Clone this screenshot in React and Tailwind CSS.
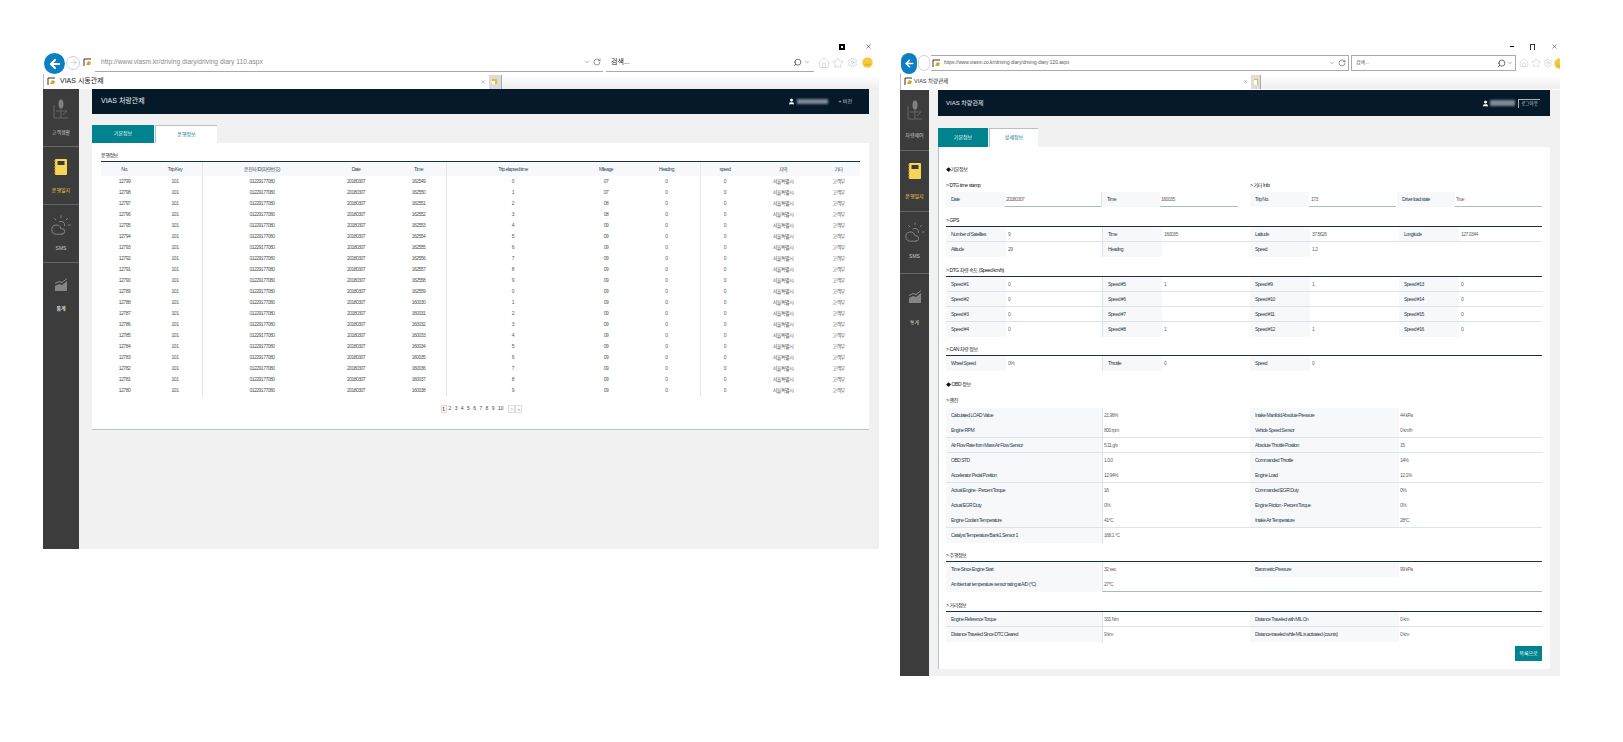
import React from 'react';
import { ArrowLeft, ArrowRight, ChevronDown, CloudSun, Home, RotateCw, Search, Settings, Star, User, X } from 'lucide-react';

const LABEL_TEXT = 'text-[#2c3e50]';
const TINY = 'text-[5px] tracking-[-0.5px]';

function Smiley() {
  return (
    <svg width="11" height="11" viewBox="0 0 11 11" className="shrink-0">
      <circle cx="5.5" cy="5.5" r="5.2" fill="#f6c93c" />
      <path d="M3 7c1.4 1.2 3.6 1.2 5 0" stroke="#b98a14" strokeWidth="0.6" fill="none" />
    </svg>
  );
}

function PageIcon() {
  return (
    <svg width="9" height="9" viewBox="0 0 9 9" className="shrink-0">
      <path d="M1 1h7" stroke="#333" strokeWidth="1" />
      <path d="M1 1v7" stroke="#333" strokeWidth="1" />
      <path d="M3 7l2-4 3 1-1 3z" fill="#d9a520" />
    </svg>
  );
}

function MicIcon() {
  return (
    <svg width="22" height="22" viewBox="0 0 22 22" className="shrink-0">
      <ellipse cx="11" cy="6" rx="2.5" ry="4.5" fill="#808080" />
      <path d="M11 10v10M4 20h14M6 13h11M4 7v13M17 13l-4 4" stroke="#6f6f6f" strokeWidth="0.8" fill="none" />
    </svg>
  );
}

function NoteIcon() {
  return (
    <svg width="22" height="22" viewBox="0 0 22 22" className="shrink-0">
      <rect x="5" y="3" width="12" height="16" rx="1" fill="#f7d358" />
      <rect x="7.5" y="5" width="7" height="4" fill="#3a3a36" />
      <path d="M4 5h2M4 8h2M4 11h2M4 14h2M4 17h2" stroke="#c9a42a" strokeWidth="1" />
    </svg>
  );
}

function ChartIcon() {
  return (
    <svg width="22" height="22" viewBox="0 0 22 22" className="shrink-0">
      <path d="M5 12l4-2 3 1 5-4v10H5z" fill="#858585" />
      <path d="M5 9.5l4-2 3 1 5-4" stroke="#8f8f8f" strokeWidth="1" fill="none" />
    </svg>
  );
}

function SideItem({ icon, label, active, spacing }) {
  return (
    <div className={`flex flex-col items-center pt-[9px] border-b border-[#666666] ${spacing}`}>
      {icon}
      <div className={active ? 'text-[5px] leading-[8px] text-[#f3d04f] whitespace-nowrap' : 'text-[5px] leading-[8px] text-[#c9c9c9] whitespace-nowrap'}>{label}</div>
    </div>
  );
}

function Title({ className, children }) {
  return <div className={`h-[10px] text-[5px] tracking-[-0.4px] leading-[10px] text-[#111111] ${className}`}>{children}</div>;
}

function Cell({ label, value, divider, last }) {
  const rule = last ? '' : 'border-b border-b-[#dbe3ec]';
  return (
    <>
      <div className={`h-[15px] pl-[5px] leading-[15px] truncate ${label ? 'bg-[#f6f8fa]' : ''} ${LABEL_TEXT} ${divider ? 'border-l border-l-[#dbe3ec]' : ''} ${rule}`}>{label}</div>
      <div className={`h-[15px] pl-[2px] leading-[15px] text-[#666666] ${rule}`}>{value}</div>
    </>
  );
}

function FourRows({ rows }) {
  return (
    <div className={`grid grid-cols-[60px_96px_60px_88px_60px_89px_60px_83px] border-t border-[#1b3044] ${TINY}`}>
      {rows.map((row, r) =>
        row.map((c, i) => <Cell key={`${r}-${i}`} label={c[0]} value={c[1]} divider={i === 1} last={r === rows.length - 1} />)
      )}
    </div>
  );
}

function WideRows({ rows, line }) {
  return (
    <div className={`grid grid-cols-[156px_148px_149px_143px] ${TINY} ${line ? 'border-t border-[#1b3044]' : ''}`}>
      {rows.map((row, r) => (
        <React.Fragment key={r}>
          {row.cells.map((c, i) => (
            <React.Fragment key={i}>
              <div className={`h-[15px] pl-[5px] bg-[#f6f8fa] leading-[15px] truncate ${LABEL_TEXT} ${row.b ? 'border-b border-b-[#dbe3ec]' : ''}`}>{c[0]}</div>
              <div className={`h-[15px] pl-[1px] leading-[15px] text-[#666666] ${i === 0 ? 'border-l border-l-[#dbe3ec]' : ''} ${row.b ? 'border-b border-b-[#dbe3ec]' : ''} ${row.u ? 'border-b border-b-[#a9bacb]' : ''}`}>{c[1]}</div>
            </React.Fragment>
          ))}
          {row.cells.length === 1 && (
            <div className={`col-span-2 h-[15px] ${row.u ? 'border-b border-b-[#a9bacb]' : ''}`} />
          )}
        </React.Fragment>
      ))}
    </div>
  );
}

const COLS = ['No.', 'Trip Key', '운전자 ID(차량번호)', 'Date', 'Time', 'Trip elapsed time', 'Mileage', 'Heading', 'speed', '지역', '기타'];
const TD = ['w-[47px]', 'w-[55px] border-r border-[#e3e6ea]', 'w-[118px]', 'w-[70px]', 'w-[56px] border-r border-[#e3e6ea]', 'w-[132px]', 'w-[54px]', 'w-[68px] border-r border-[#e3e6ea]', 'w-[48px]', 'w-[68px]', 'w-[43px]'];
const TIMES = ['162549', '162550', '162551', '162552', '162553', '162554', '162555', '162556', '162557', '162558', '162559', '160030', '160031', '160032', '160033', '160034', '160035', '160036', '160037', '160038'];
const MILE = ['07', '07', '08', '08', '09', '09', '09', '09', '09', '09', '09', '09', '09', '09', '09', '09', '09', '09', '09', '09'];
const TABLE_ROWS = TIMES.map((t, i) => [
  String(12799 - i), '101', '01229177080', '20180307', t, String(i % 10), MILE[i], '0', '0', '서울특별시', '고객무',
]);

function DrivingWindow() {
  return (
    <div className="w-[836px] mt-[40px] ml-[43px] shrink-0">
      <div className="h-[13px] flex items-center justify-end pr-[7px] gap-[20px]">
        <div className="w-[6px] h-[6px] border-2 border-black" />
        <X size={7} color="#333" />
      </div>
      <div className="relative h-[19px] flex items-center">
        <div className="absolute left-[1px] top-0 w-[21px] h-[21px] rounded-full bg-[#0a7fc4] flex items-center justify-center">
          <ArrowLeft size={14} color="#fff" strokeWidth={3.5} />
        </div>
        <div className="ml-[23px] w-[14px] h-[14px] rounded-full border border-[#cfcfcf] flex items-center justify-center shrink-0">
          <ArrowRight size={9} color="#c4c4c4" />
        </div>
        <div className="ml-[3px] w-[10px] shrink-0"><PageIcon /></div>
        <div className="ml-[2px] w-[508px] h-[19px] flex items-center border-b border-[#aaaaaa] pl-[6px] shrink-0">
          <span className="text-[6.7px] text-[#8a8a8a] whitespace-nowrap">http://www.vlasm.kr/driving diary/driving diary 110.aspx</span>
          <ChevronDown size={6} color="#666" className="ml-auto" />
          <RotateCw size={8} color="#666" className="ml-[3px] mr-[2px]" />
        </div>
        <div className="ml-[3px] w-[208px] h-[19px] flex items-center border-b border-[#aaaaaa] pl-[5px] shrink-0">
          <span className="text-[7px] text-[#222]">검색...</span>
          <Search size={9} color="#444" className="ml-auto scale-x-[-1]" />
          <ChevronDown size={6} color="#666" className="ml-[2px] mr-[4px]" />
        </div>
        <Home size={12} color="#b5b5b5" strokeWidth={1} className="ml-[4px] shrink-0" />
        <Star size={12} color="#b5b5b5" strokeWidth={1} className="ml-[2px] shrink-0" />
        <Settings size={11} color="#b5b5b5" strokeWidth={1} className="ml-[3px] shrink-0" />
        <div className="ml-[4px]"><Smiley /></div>
      </div>
      <div className="mt-[2px] h-[15px] flex items-center border-l border-[#bbbbbb] pl-[3px]">
        <PageIcon />
        <span className="ml-[4px] text-[7px] text-[#222] whitespace-nowrap">VIAS 시동관제</span>
        <X size={6} color="#888" className="ml-[376px]" />
        <div className="ml-[3px] w-[13px] h-[14px] bg-[#dcdcdc] border-r border-[#aaa] flex items-center justify-center">
          <div className="w-[5px] h-[5px] bg-white border-t-2 border-r-2 border-t-[#f5b81d] border-r-[#f5b81d]" />
        </div>
        <div className="flex-1 h-[14px] bg-gradient-to-b from-white to-[#eeeeee]" />
      </div>
      <div className="h-[460px] flex bg-[#f1f1f1]">
        <div className="w-[36px] bg-[#3c3c3c] shrink-0">
          <SideItem icon={<MicIcon />} label="고객생활" spacing="h-[58px] gap-[8px]" />
          <SideItem icon={<NoteIcon />} label="운행일지" active spacing="h-[58px] gap-[8px]" />
          <SideItem icon={<CloudSun size={22} color="#8a8a8a" strokeWidth={1} />} label="SMS" spacing="h-[58px] gap-[8px]" />
          <div className="h-[58px] flex flex-col items-center pt-[11px] gap-[8px]">
            <ChartIcon />
            <div className="text-[5px] leading-[8px] text-[#d8d8d8] font-bold">통계</div>
          </div>
        </div>
        <div className="w-[777px] ml-[13px]">
          <div className="h-[25px] bg-[#051929] flex items-center pl-[9px] pr-[17px]">
            <span className="text-[7px] text-[#e6eaee]">VIAS 처량관제</span>
            <User size={7} color="#fff" fill="#fff" className="ml-auto" />
            <div className="ml-[2px] w-[31px] h-[5px] bg-[#7f8a96] blur-[1px]" />
            <span className="ml-[10px] text-[5px] text-[#c8ced4]">+ 버전</span>
          </div>
          <div className="mt-[11px] flex h-[18px]">
            <div className="w-[62px] bg-[#00828f] text-white text-[5px] flex items-center justify-center">기본정보</div>
            <div className="ml-[1px] w-[62px] bg-white border-t border-l border-[#b3c0d0] text-[#00727f] text-[5px] flex items-center justify-center">운행정보</div>
          </div>
          <div className="bg-white h-[287px] px-[9px] pt-[7px] border-b border-[#b3c0d0]">
            <Title className="mb-[1px]">운행정보</Title>
            <div className="border-t border-[#1b3044] w-[759px]">
              <div className="flex h-[14px] bg-[#f6f8fa]">
                {COLS.map((c, i) => (
                  <div key={c} className={`${TD[i]} text-center ${TINY} leading-[14px] text-[#34495e] whitespace-nowrap`}>{c}</div>
                ))}
              </div>
              {TABLE_ROWS.map((row, r) => (
                <div key={r} className="flex h-[11px]">
                  {row.map((v, i) => (
                    <div key={i} className={`${TD[i]} text-center ${TINY} leading-[11px] text-[#555555]`}>{v}</div>
                  ))}
                </div>
              ))}
            </div>
            <div className="mt-[9px] flex justify-center pl-[2px] items-center text-[5px] text-[#444444]">
              <div className="w-[6px] h-[8px] border border-[#dddddd] text-[#dd2222] text-center leading-[6px] font-bold">1</div>
              {['2', '3', '4', '5', '6', '7', '8', '9'].map((n) => (
                <div key={n} className="w-[6.2px] text-center">{n}</div>
              ))}
              <div className="w-[9px] text-center">10</div>
              <div className="ml-[3px] w-[7px] h-[8px] border border-[#dddddd] text-center leading-[6px] text-[#999]">&gt;</div>
              <div className="w-[7px] h-[8px] border border-[#dddddd] text-center leading-[6px] text-[#999]">»</div>
            </div>
          </div>
        </div>
      </div>
    </div>
  );
}

const blank = '';
const SPEED_ROWS = [
  [['Speed #1', '0'], ['Speed #5', '1'], ['Speed #9', '1'], ['Speed #13', '0']],
  [['Speed #2', '0'], ['Speed #6', blank], ['Speed #10', blank], ['Speed #14', '0']],
  [['Speed #3', '0'], ['Speed #7', blank], ['Speed #11', blank], ['Speed #15', '0']],
  [['Speed #4', '0'], ['Speed #8', '1'], ['Speed #12', '1'], ['Speed #16', '0']],
];

const OBD_ROWS = [
  { cells: [['Calculated LOAD Value', '21.96%'], ['Intake Manifold Absolute Pressure', '44 kPa']] },
  { b: true, cells: [['Engine RPM', '800 rpm'], ['Vehicle Speed Sensor', '0 km/h']] },
  { b: true, cells: [['Air Flow Rate from Mass Air Flow Sensor', '5.11 g/s'], ['Absolute Throttle Position', '15']] },
  { cells: [['OBD STD', '1.0.0'], ['Commanded Throttle', '14%']] },
  { b: true, cells: [['Accelerator Pedal Position', '12.94%'], ['Engine Load', '12.1%']] },
  { cells: [['Actual Engine - Percent Torque', '16'], ['Commanded EGR Duty', '0%']] },
  { cells: [['Actual EGR Duty', '0%'], ['Engine Friction - Percent Torque', '0%']] },
  { b: true, cells: [['Engine Coolant Temperature', '41°C'], ['Intake Air Temperature', '28°C']] },
  { cells: [['Catalyst Temperature Bank1 Sensor 1', '168.1 °C']] },
];

function DetailWindow() {
  return (
    <div className="w-[660px] mt-[40px] ml-[21px] shrink-0 overflow-hidden">
      <div className="h-[13px] flex items-center justify-end pr-[2px] gap-[16px]">
        <div className="w-[4px] h-[1px] bg-black" />
        <div className="w-[5px] h-[6px] border-t border-l border-r border-[#333]" />
        <X size={7} color="#333" />
      </div>
      <div className="relative h-[20px] flex items-center">
        <div className="absolute left-[1px] top-0 w-[16px] h-[21px] rounded-full bg-[#0a7fc4] flex items-center justify-center">
          <ArrowLeft size={11} color="#fff" strokeWidth={3.5} />
        </div>
        <div className="ml-[18px] w-[12px] h-[16px] rounded-full border border-[#d5d5d5] shrink-0" />
        <div className="ml-[1px] w-[418px] h-[16px] flex items-center border-y border-r border-[#aaaaaa] pl-[1px] shrink-0">
          <PageIcon />
          <span className="ml-[3px] text-[4.8px] text-[#555555] whitespace-nowrap">https://www.viasm.co.kr/driving diary/driving diary 120.aspx</span>
          <ChevronDown size={6} color="#666" className="ml-auto" />
          <RotateCw size={8} color="#666" className="ml-[3px] mr-[2px]" />
        </div>
        <div className="ml-[2px] w-[165px] h-[16px] flex items-center border border-[#aaaaaa] pl-[4px] shrink-0">
          <span className="text-[5px] text-[#555]">검색...</span>
          <Search size={9} color="#444" className="ml-auto scale-x-[-1]" />
          <ChevronDown size={6} color="#666" className="ml-[1px] mr-[2px]" />
        </div>
        <Home size={10} color="#b5b5b5" strokeWidth={1} className="ml-[3px] shrink-0" />
        <Star size={10} color="#b5b5b5" strokeWidth={1} className="ml-[2px] shrink-0" />
        <Settings size={10} color="#b5b5b5" strokeWidth={1} className="ml-[2px] shrink-0" />
        <div className="ml-[1px] shrink-0"><Smiley /></div>
      </div>
      <div className="h-[17px] flex items-center border-l border-[#bbbbbb] pl-[3px]">
        <PageIcon />
        <span className="ml-[1px] w-[34px] text-[5.5px] text-[#333] whitespace-nowrap">VIAS 차량관제</span>
        <X size={5} color="#888" className="ml-[295px]" />
        <div className="ml-[3px] w-[10px] h-[14px] bg-[#dcdcdc] border-r border-[#aaa] flex items-center justify-center">
          <div className="w-[4px] h-[6px] bg-white border-t border-r border-t-[#f5b81d] border-r-[#f5b81d]" />
        </div>
        <div className="flex-1 h-[14px] bg-gradient-to-b from-white to-[#eeeeee]" />
      </div>
      <div className="h-[586px] flex bg-[#f1f1f1]">
        <div className="w-[29px] bg-[#3c3c3c] shrink-0">
          <SideItem icon={<MicIcon />} label="차량제어" spacing="h-[61px] gap-[10px]" />
          <SideItem icon={<NoteIcon />} label="운행일지" active spacing="h-[61px] gap-[10px]" />
          <SideItem icon={<CloudSun size={22} color="#8a8a8a" strokeWidth={1} />} label="SMS" spacing="h-[62px] gap-[9px]" />
          <div className="h-[60px] flex flex-col items-center pt-[12px] gap-[10px]">
            <ChartIcon />
            <div className="text-[5px] leading-[8px] text-[#c8c8c8]">통계</div>
          </div>
        </div>
        <div className="w-[612px] ml-[9px]">
          <div className="h-[26px] bg-[#051929] flex items-center pl-[8px] pr-[10px]">
            <span className="text-[6px] text-[#e6eaee]">VIAS 차량관제</span>
            <User size={7} color="#fff" fill="#fff" className="ml-auto" />
            <div className="ml-[1px] w-[25px] h-[6px] bg-[#7f8a96] blur-[1px]" />
            <div className="ml-[3px] w-[22px] h-[9px] border-t border-l border-[#aeb6bd] text-[4.5px] leading-[8px] text-[#d6dade] text-center">로그아웃</div>
          </div>
          <div className="mt-[12px] flex h-[19px]">
            <div className="w-[50px] bg-[#00828f] text-white text-[5px] flex items-center justify-center">기본정보</div>
            <div className="ml-[1px] w-[49px] bg-white border-t border-l border-[#b3c0d0] text-[#00727f] text-[5px] flex items-center justify-center">상세정보</div>
          </div>
          <div className="bg-white h-[522px] border-l border-[#b3c0d0] pl-[7px] pr-[8px] pt-[17px] flex flex-col">
            <Title>◆기본정보</Title>
            <div className="mt-[6px] flex gap-[12px]">
              <div className="w-[292px]">
                <Title className="mb-[2px]">&gt; DTG time stamp</Title>
                <div className={`flex h-[15px] ${TINY} leading-[15px]`}>
                  <div className={`w-[59px] pl-[5px] bg-[#f6f8fa] ${LABEL_TEXT}`}>Date</div>
                  <div className="w-[96px] pl-[1px] border-b border-[#a9bacb] text-[#666666]">20180307</div>
                  <div className={`w-[59px] pl-[5px] bg-[#f6f8fa] border-l border-[#dbe3ec] ${LABEL_TEXT}`}>Time</div>
                  <div className="w-[78px] pl-[1px] border-b border-[#a9bacb] text-[#666666]">160035</div>
                </div>
              </div>
              <div className="flex-1">
                <Title className="mb-[2px]">&gt; 기타 Info</Title>
                <div className={`flex h-[15px] ${TINY} leading-[15px]`}>
                  <div className={`w-[59px] pl-[5px] bg-[#f6f8fa] ${LABEL_TEXT}`}>Trip No.</div>
                  <div className="w-[87px] pl-[2px] border-b border-[#a9bacb] text-[#666666]">173</div>
                  <div className={`ml-[1px] w-[58px] pl-[5px] bg-[#f6f8fa] ${LABEL_TEXT}`}>Driver load state</div>
                  <div className="w-[87px] pl-[1px] border-b border-[#a9bacb] text-[#666666]">True</div>
                </div>
              </div>
            </div>
            <Title className="mt-[8px] mb-[1px]">&gt; GPS</Title>
            <FourRows
              rows={[
                [['Number of Satellites', '9'], ['Time', '160035'], ['Latitude', '37.5626'], ['Longitude', '127.0344']],
                [['Altitude', '29'], ['Heading', blank], ['Speed', '1.2'], ['', '']],
              ]}
            />
            <Title className="mt-[8px] mb-[1px]">&gt; DTG 차량 속도 (Speed km/h)</Title>
            <FourRows rows={SPEED_ROWS} />
            <Title className="mt-[7px] mb-[1px]">&gt; CAN 차량 정보</Title>
            <FourRows rows={[[['Wheel Speed', '0%'], ['Throttle', '0'], ['Speed', '0'], ['', '']]]} />
            <Title className="mt-[8px]">◆ OBD 정보</Title>
            <Title className="mt-[6px] mb-[3px]">&gt; 엔진</Title>
            <WideRows rows={OBD_ROWS} />
            <Title className="mt-[7px] mb-[1px]">&gt; 주행정보</Title>
            <WideRows
              line
              rows={[
                { cells: [['Time Since Engine Start', '32 sec'], ['Barometric Pressure', '99 kPa']] },
                { u: true, cells: [['Ambient air temperature sensor rating at A/D (°C)', '27°C']] },
              ]}
            />
            <Title className="mt-[8px] mb-[1px]">&gt; 거리정보</Title>
            <WideRows
              line
              rows={[
                { b: true, cells: [['Engine Reference Torque', '331 Nm'], ['Distance Traveled with MIL On', '0 km']] },
                { cells: [['Distance Traveled Since DTC Cleared', '9 km'], ['Distance traveled while MIL is activated (counts)', '0 km']] },
              ]}
            />
            <div className="mt-[4px] self-end w-[27px] h-[15px] bg-[#00828f] text-white text-[5px] leading-[15px] text-center">목록으로</div>
          </div>
        </div>
      </div>
    </div>
  );
}

export default function App() {
  return (
    <div className="w-[1623px] h-[742px] overflow-hidden bg-white flex items-start font-['Liberation_Sans','Noto_Sans_CJK_KR',sans-serif]">
      <DrivingWindow />
      <DetailWindow />
    </div>
  );
}
